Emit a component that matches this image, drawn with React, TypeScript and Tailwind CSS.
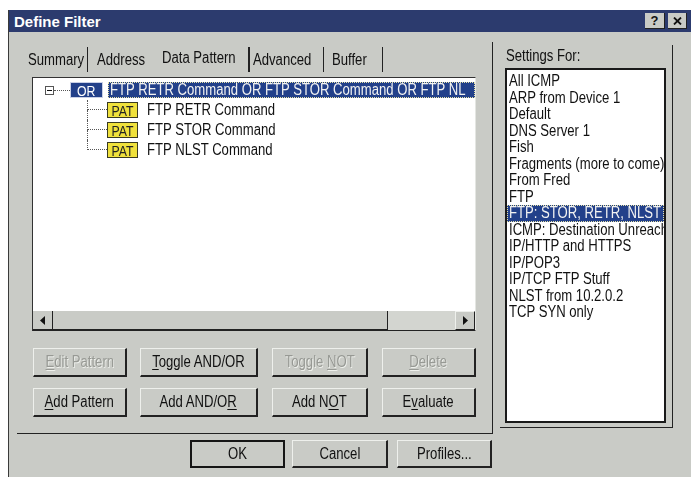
import React from "react";

const ui = "font-['Liberation_Sans',Arial,sans-serif]";

// narrow face: Liberation Sans squeezed horizontally to the width of the old system font
function Txt({ children, center }: { children: React.ReactNode; center?: boolean }) {
  return (
    <span
      className={`inline-block whitespace-nowrap scale-x-[0.82] ${center ? "origin-center" : "origin-left"}`}
    >
      {children}
    </span>
  );
}

function U({ children }: { children: React.ReactNode }) {
  return <span className="underline underline-offset-2 decoration-1">{children}</span>;
}

function Btn({
  children,
  w,
  disabled,
  isDefault,
  h = "h-[29px]",
}: {
  children: React.ReactNode;
  w: string;
  disabled?: boolean;
  isDefault?: boolean;
  h?: string;
}) {
  const frame = isDefault
    ? "border-2 border-[#151515]"
    : "border-t border-l border-t-[#eef0ec] border-l-[#eef0ec] border-r-2 border-b-2 border-r-[#222] border-b-[#222]";
  return (
    <div
      className={`${w} ${h} ${frame} bg-[#c9cbc6] flex items-center justify-center text-[16px] leading-none ${
        disabled ? "text-[#979994] [text-shadow:1px_1px_0_#eef0ec]" : "text-[#111]"
      }`}
    >
      <Txt center>{children}</Txt>
    </div>
  );
}

function Tab({
  label,
  w,
  pl,
  sep,
  raised,
}: {
  label: string;
  w: string;
  pl: string;
  sep?: string;
  raised?: boolean;
}) {
  return (
    <div className={`${w} ${pl} h-[25px] flex items-center ${sep ?? ""} ${raised ? "pb-[3px]" : ""}`}>
      <span className="text-[16px] leading-none text-[#111]">
        <Txt>{label}</Txt>
      </span>
    </div>
  );
}

function PatRow({ label, last }: { label: string; last?: boolean }) {
  return (
    <div className="flex h-[20px] items-center">
      <div className="w-[20px] h-full flex flex-col">
        <div className="h-[10px] border-l border-b border-dotted border-[#555]" />
        <div className={`h-[10px] ${last ? "" : "border-l border-dotted border-[#555]"}`} />
      </div>
      <div className="w-[31px] h-[16px] bg-[#f0e13c] border border-[#3a3a20] flex items-center justify-center text-[15px] leading-none text-[#222]">
        <Txt center>PAT</Txt>
      </div>
      <span className="ml-[9px] text-[16px] leading-none text-[#111]">
        <Txt>{label}</Txt>
      </span>
    </div>
  );
}

function Arrow({ dir }: { dir: "l" | "r" }) {
  return (
    <svg width="5" height="9" viewBox="0 0 5 9">
      {dir === "l" ? <polygon points="5,0 0,4.5 5,9" fill="#111" /> : <polygon points="0,0 5,4.5 0,9" fill="#111" />}
    </svg>
  );
}

const settings = [
  "All ICMP",
  "ARP from Device 1",
  "Default",
  "DNS Server 1",
  "Fish",
  "Fragments (more to come)",
  "From Fred",
  "FTP",
  "FTP: STOR, RETR, NLST",
  "ICMP: Destination Unreachable",
  "IP/HTTP and HTTPS",
  "IP/POP3",
  "IP/TCP FTP Stuff",
  "NLST from 10.2.0.2",
  "TCP SYN only",
];

export default function App() {
  return (
    <div className={`w-[691px] h-[477px] bg-white pt-[10px] pl-[8px] overflow-hidden ${ui}`}>
      <div className="w-[683px] h-[467px] bg-[#c9cbc6] border-l border-[#3a3a3a] flex flex-col">
        {/* caption */}
        <div className="h-[22px] shrink-0 bg-[#2c3b6e] flex items-center pl-[5px] pr-[4px]">
          <span className="font-bold text-[15px] leading-none text-white">Define Filter</span>
          <div className="ml-auto flex gap-[3px]">
            <div className="w-[20px] h-[16px] bg-[#c9cbc6] border-r border-b border-[#222] flex items-center justify-center font-bold text-[13px] leading-none text-[#111]">
              ?
            </div>
            <div className="w-[19px] h-[16px] bg-[#c9cbc6] border-r border-b border-[#222] flex items-center justify-center">
              <svg width="9" height="8" viewBox="0 0 9 8">
                <path d="M1 0.5 L8 7.5 M8 0.5 L1 7.5" stroke="#111" strokeWidth="1.8" />
              </svg>
            </div>
          </div>
        </div>

        {/* body */}
        <div className="flex items-start">
          {/* property sheet */}
          <div className="ml-[8px] mt-[10px] w-[476px] border-r border-b border-[#222] flex flex-col">
            <div className="h-[35px] flex items-center pl-[11px]">
              <Tab label="Summary" w="w-[60px]" pl="pl-0" sep="border-r border-[#222]" />
              <Tab label="Address" w="w-[64px]" pl="pl-[9px]" />
              <Tab label="Data Pattern" w="w-[98px]" pl="pl-[10px]" sep="border-r-2 border-[#222]" raised />
              <Tab label="Advanced" w="w-[74px]" pl="pl-[3px]" sep="border-r border-[#222]" />
              <Tab label="Buffer" w="w-[59px]" pl="pl-[8px]" sep="border-r border-[#222]" />
            </div>

            {/* tree view */}
            <div className="ml-[15px] w-[444px] h-[254px] border border-l-[#333] border-t-[#333] border-b-[#222] border-r-[#e4e6e2] flex flex-col">
              <div className="flex-1 bg-white overflow-hidden">
                <div className="mt-[2px] h-[20px] flex items-center pl-[12px]">
                  <div className="w-[9px] h-[9px] border border-[#555] bg-white flex items-center justify-center">
                    <div className="w-[5px] h-px bg-[#111]" />
                  </div>
                  <div className="w-[16px] border-t border-dotted border-[#555]" />
                  <div className="w-[33px] h-[16px] bg-[#22408a] border border-[#c9d0e6] flex items-center justify-center text-[15px] leading-none text-white">
                    <Txt center>OR</Txt>
                  </div>
                  <div className="ml-[5px] flex-1 h-[16px] bg-[#22408a] outline outline-1 outline-dotted outline-[#e7e2a8] -outline-offset-1 flex items-center pl-[2px] overflow-hidden">
                    <span className="text-[16px] leading-none text-[#f2f2f2]">
                      <Txt>FTP RETR Command OR FTP STOR Command OR FTP NL</Txt>
                    </span>
                  </div>
                </div>
                <div className="ml-[54px]">
                  <PatRow label="FTP RETR Command" />
                  <PatRow label="FTP STOR Command" />
                  <PatRow label="FTP NLST Command" last />
                </div>
              </div>
              {/* horizontal scroll bar */}
              <div className="h-[19px] flex bg-[#c9cbc6]">
                <div className="w-[20px] h-full border-r border-b border-[#222] flex items-center justify-center">
                  <Arrow dir="l" />
                </div>
                <div className="w-[335px] h-full border-r border-b border-[#222]" />
                <div className="flex-1 h-full bg-[#d3d5d0]" />
                <div className="w-[20px] h-full border-l border-t border-l-[#eef0ec] border-t-[#eef0ec] border-r border-b border-r-[#222] border-b-[#222] flex items-center justify-center">
                  <Arrow dir="r" />
                </div>
              </div>
            </div>

            {/* pattern buttons */}
            <div className="mt-[17px] ml-[16px] flex">
              <Btn w="w-[94px]" disabled>
                <U>E</U>dit Pattern
              </Btn>
              <div className="ml-[13px]">
                <Btn w="w-[118px]">
                  <U>T</U>oggle AND/OR
                </Btn>
              </div>
              <div className="ml-[14px]">
                <Btn w="w-[96px]" disabled>
                  Toggle <U>N</U>OT
                </Btn>
              </div>
              <div className="ml-[14px]">
                <Btn w="w-[94px]" disabled>
                  <U>D</U>elete
                </Btn>
              </div>
            </div>
            <div className="mt-[11px] mb-[16px] ml-[16px] flex">
              <Btn w="w-[94px]">
                <U>A</U>dd Pattern
              </Btn>
              <div className="ml-[13px]">
                <Btn w="w-[118px]">
                  Add AND/O<U>R</U>
                </Btn>
              </div>
              <div className="ml-[14px]">
                <Btn w="w-[96px]">
                  Add N<U>O</U>T
                </Btn>
              </div>
              <div className="ml-[14px]">
                <Btn w="w-[94px]">
                  E<U>v</U>aluate
                </Btn>
              </div>
            </div>
          </div>

          {/* settings list */}
          <div className="ml-[7px] mt-[13px] w-[173px] border-r border-b border-[#222] flex flex-col pt-[2px]">
            <div className="h-[18px] mb-[3px] pl-[6px] flex items-center text-[16px] leading-none text-[#111]">
              <Txt>Settings For:</Txt>
            </div>
            <div className="ml-[5px] mb-[4px] w-[161px] h-[355px] border-2 border-[#1a1a1a] bg-white pt-[3px] overflow-hidden">
              {settings.map((s, i) => (
                <div
                  key={s}
                  className={`h-[16.5px] pl-[2px] flex items-center text-[16px] leading-none ${
                    i === 8
                      ? "bg-[#22408a] text-[#f2f2f2] outline outline-1 outline-dotted outline-[#e7e2a8] -outline-offset-1"
                      : "text-[#111]"
                  }`}
                >
                  <Txt>{s}</Txt>
                </div>
              ))}
            </div>
          </div>
        </div>

        {/* dialog buttons */}
        <div className="mt-[6px] pl-[181px] flex">
          <Btn w="w-[95px]" h="h-[28px]" isDefault>
            OK
          </Btn>
          <div className="ml-[7px]">
            <Btn w="w-[96px]" h="h-[28px]">
              Cancel
            </Btn>
          </div>
          <div className="ml-[9px]">
            <Btn w="w-[95px]" h="h-[28px]">
              Profiles...
            </Btn>
          </div>
        </div>
      </div>
    </div>
  );
}
